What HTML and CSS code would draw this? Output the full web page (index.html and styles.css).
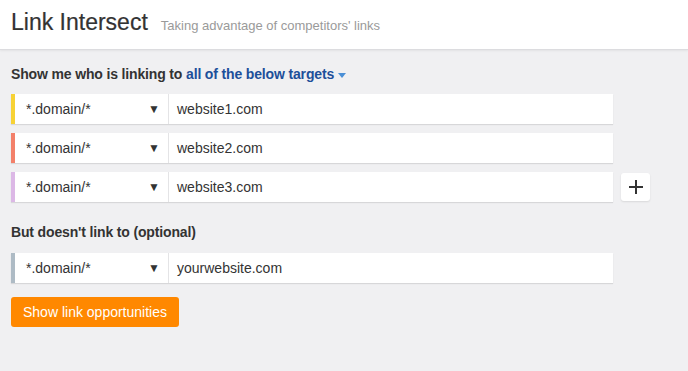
FILE: index.html
```html
<!DOCTYPE html>
<html lang="en">
<head>
  <meta charset="UTF-8">
  <meta name="viewport" content="width=device-width, initial-scale=1.0">
  <title>Link Intersect</title>
  <link rel="stylesheet" href="styles.css">
</head>
<body>
  <header class="page-header">
    <h1>Link Intersect</h1>
    <span class="subtitle">Taking advantage of competitors' links</span>
  </header>

  <main>
    <h3 class="section-title">
      Show me who is linking to
      <a class="targets-mode">all of the below targets</a><span class="caret"></span>
    </h3>

    <div class="target-row">
      <div class="target">
        <span class="marker yellow"></span>
        <div class="mode">*.domain/* <span class="arrow">&#9660;</span></div>
        <div class="url">website1.com</div>
      </div>
    </div>
    <div class="target-row">
      <div class="target">
        <span class="marker salmon"></span>
        <div class="mode">*.domain/* <span class="arrow">&#9660;</span></div>
        <div class="url">website2.com</div>
      </div>
    </div>
    <div class="target-row">
      <div class="target">
        <span class="marker lilac"></span>
        <div class="mode">*.domain/* <span class="arrow">&#9660;</span></div>
        <div class="url">website3.com</div>
      </div>
      <button class="add-btn" title="Add target">
        <svg width="16" height="16" viewBox="0 0 16 16">
          <path d="M8 1v14M1 8h14" stroke="#333" stroke-width="2" fill="none"/>
        </svg>
      </button>
    </div>

    <h3 class="section-title optional">But doesn't link to (optional)</h3>

    <div class="target-row">
      <div class="target">
        <span class="marker grey"></span>
        <div class="mode">*.domain/* <span class="arrow">&#9660;</span></div>
        <div class="url">yourwebsite.com</div>
      </div>
    </div>

    <button class="submit">Show link opportunities</button>
  </main>
</body>
</html>
```

FILE: styles.css
```css
* {
  box-sizing: border-box;
}

body {
  margin: 0;
  font-family: "Liberation Sans", Arial, sans-serif;
  background-color: #f0f0f2;
  color: #333;
}

.page-header {
  display: flex;
  align-items: baseline;
  height: 50px;
  padding: 9px 11px 0;
  background: #fff;
  border-bottom: 1px solid #dcdcdf;
  box-shadow: 0 1px 2px rgba(0, 0, 0, 0.06);
}

.page-header h1 {
  margin: 0;
  font-size: 23px;
  font-weight: normal;
  line-height: 26px;
  color: #333;
  -webkit-text-stroke: 0.2px #333;
}

.subtitle {
  margin-left: 13px;
  font-size: 13px;
  color: #9a9a9a;
}

main {
  padding: 14px 11px 0;
}

.section-title {
  margin: 0 0 10px;
  font-size: 14px;
  line-height: 20px;
  letter-spacing: -0.15px;
  font-weight: bold;
  color: #333;
}

.section-title.optional {
  margin: 20px 0 11px;
}

.targets-mode {
  color: #1d4f9a;
  cursor: pointer;
}

.caret {
  display: inline-block;
  margin-left: 4px;
  vertical-align: middle;
  border-left: 4px solid transparent;
  border-right: 4px solid transparent;
  border-top: 5px solid #4a8fd6;
}

.target-row {
  display: flex;
  align-items: center;
  margin-bottom: 9px;
}

.target {
  display: flex;
  width: 602px;
  height: 30px;
  background: #fff;
  box-shadow: 0 1px 1px rgba(0, 0, 0, 0.1);
  font-size: 14px;
}

.marker {
  width: 4px;
  flex-shrink: 0;
}

.yellow { background: #f7d235; }
.salmon { background: #f3806a; }
.lilac { background: #dcb8e6; }
.grey { background: #aebbc5; }

.mode {
  display: flex;
  align-items: center;
  justify-content: space-between;
  width: 154px;
  padding: 0 8px 0 11px;
  border-right: 1px solid #e4e4e6;
  line-height: 30px;
}

.arrow {
  font-size: 12px;
  color: #333;
}

.url {
  flex: 1;
  padding: 0 8px;
  line-height: 30px;
}

.add-btn {
  display: flex;
  align-items: center;
  justify-content: center;
  width: 29px;
  height: 28px;
  margin-left: 8px;
  padding: 0;
  border: none;
  border-radius: 3px;
  background: #fff;
  box-shadow: 0 1px 2px rgba(0, 0, 0, 0.1);
}

.submit {
  display: block;
  margin-top: 14px;
  height: 30px;
  padding: 0 12px;
  border: none;
  border-radius: 3px;
  background: #ff8800;
  color: #fff;
  font-family: "Liberation Sans", Arial, sans-serif;
  font-size: 14px;
}
```
